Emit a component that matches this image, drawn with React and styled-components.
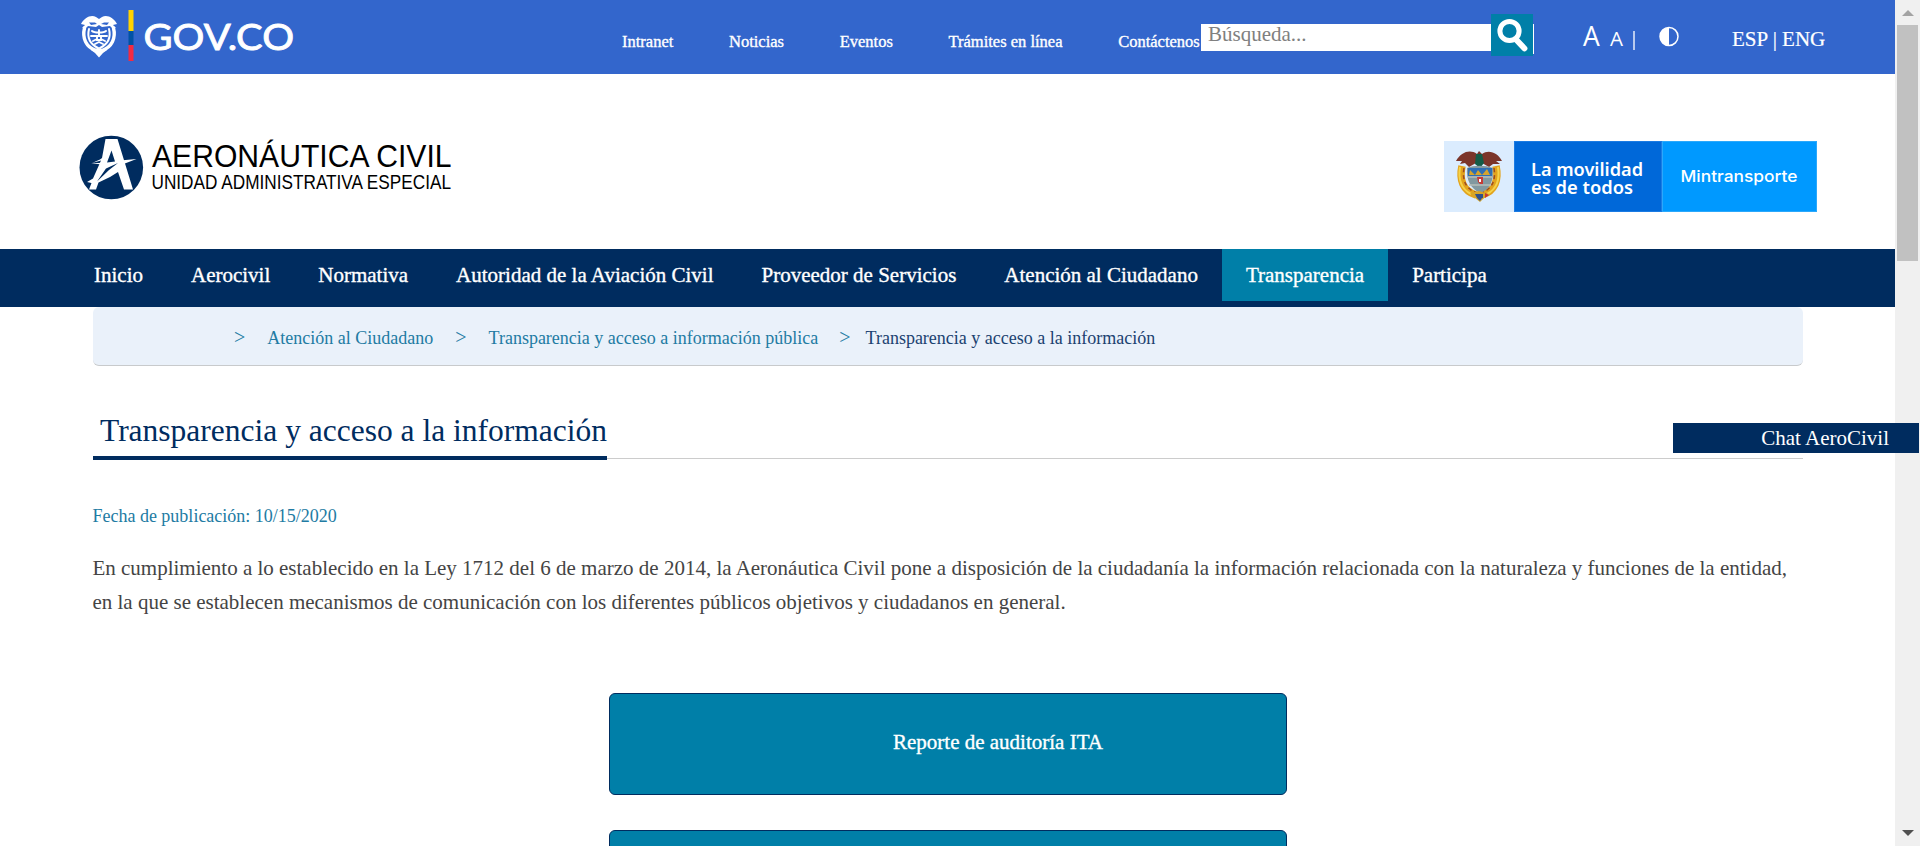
import React from 'react';
import styled, { createGlobalStyle } from 'styled-components';

const navy = '#002c5f';
const teal = '#007fa8';

const GlobalStyle = createGlobalStyle`
  * { box-sizing: border-box; }
  body { margin: 0; background: #fff; overflow: hidden; }
  a { color: inherit; text-decoration: none; }
  svg { display: block; overflow: visible; }
`;

const Window = styled.div`
  display: flex;
  position: relative;
  height: 846px;
  overflow: hidden;
  font: 21px/34px 'Liberation Serif', serif;
`;
const Page = styled.div`
  flex: 1;
  min-width: 0;
  display: flex;
  flex-direction: column;
`;

const TopBar = styled.header`
  flex: none;
  display: flex;
  align-items: flex-start;
  height: 74px;
  padding-left: 78px;
  background: #3366cc;
  color: #fff;
`;
const TopLinks = styled.nav`
  display: flex;
  gap: 55.7px;
  width: 579px;
  margin-left: 324px;
  padding-top: 32px;
  font-size: 16.5px;
  line-height: 20px;
  white-space: nowrap;
  -webkit-text-stroke: 0.35px #fff;
`;
const Search = styled.form`
  display: flex;
  width: 333px;
  padding-top: 14px;
`;
const SearchInput = styled.input`
  width: 290px;
  height: 27px;
  margin: 10px 0 0;
  padding: 0 7px 7px;
  border: 0;
  border-radius: 0;
  background: #fff;
  font: 21px/20px 'Liberation Serif', serif;
  &::placeholder { color: #808080; opacity: 1; }
`;
const SearchButton = styled.button`
  width: 42px;
  height: 42px;
  padding: 0;
  border: 0;
  background: ${teal};
`;
const SearchEdge = styled.span`
  width: 1px;
  height: 30px;
  margin-top: 10px;
  background: #fff;
`;
const Tools = styled.div`
  display: flex;
  align-items: baseline;
  width: 75px;
  margin: 20px 0 0 49px;
  font-family: 'Open Sans', sans-serif;
  line-height: 33px;
`;
const FontSize = styled.span`
  width: ${(p) => p.$width}px;
  font-size: ${(p) => p.$size}px;
`;
const Divider = styled.span`
  width: 2px;
  height: 19px;
  align-self: flex-start;
  margin: 11px 0 0;
  background: #b9caee;
`;
const Contrast = styled.svg`
  margin: 27px 53px 0 1px;
`;
const Language = styled.div`
  padding-top: 29px;
  line-height: 20px;
  white-space: nowrap;
  -webkit-text-stroke: 0.2px #fff;
`;

const Brand = styled.div`
  flex: none;
  display: flex;
  justify-content: space-between;
  align-items: flex-start;
  height: 175px;
  padding: 56px 78px 0 79px;
`;
const Banner = styled.div`
  display: flex;
  width: 373px;
  height: 71px;
  margin-top: 11px;
`;
const BannerPart = styled.div`
  width: ${(p) => p.$width}px;
  background: ${(p) => p.$bg};
  box-shadow: inset 0 0 0 1px ${(p) => p.$edge};
`;

const MainNav = styled.nav`
  flex: none;
  display: flex;
  height: 58px;
  padding-left: 70px;
  background: ${navy};
`;
const NavItem = styled.a`
  height: 52px;
  padding: 0 24px;
  background: ${(p) => (p.$active ? teal : 'transparent')};
  color: #fff;
  line-height: 52px;
  white-space: nowrap;
  -webkit-text-stroke: 0.35px #fff;
`;

const Content = styled.main`
  flex: none;
  margin: 0 92px 0 93px;
`;
const Breadcrumb = styled.div`
  display: flex;
  height: 59px;
  padding: 2px 0 0 141px;
  border-bottom: 1px solid #c8cacc;
  border-radius: 6px;
  background: #eaf1fa;
  color: #227ba3;
  font-size: 18px;
  line-height: 58px;
  white-space: nowrap;
`;
const Arrow = styled.span`
  margin: 0 ${(p) => p.$after}px 0 ${(p) => p.$before}px;
  font-size: 20px;
  line-height: 56px;
`;
const Current = styled.span`
  color: #1b4270;
`;
const TitleRow = styled.div`
  display: flex;
  height: 54px;
  margin-top: 39px;
  border-bottom: 1px solid #ccc;
`;
const Title = styled.h1`
  height: 55px;
  margin: 0;
  padding-left: 7px;
  border-bottom: 4px solid ${navy};
  color: ${navy};
  font-size: 31.5px;
  font-weight: 400;
  line-height: 51px;
  white-space: nowrap;
`;
const Published = styled.p`
  margin: 47px 0 0 -0.6px;
  color: #227ba3;
  font-size: 18px;
  line-height: 20px;
`;
const Intro = styled.p`
  margin: 25px 0 0 -0.6px;
  color: #444;
`;
const Cards = styled.div`
  display: flex;
  flex-direction: column;
  align-items: center;
  gap: 35px;
  margin-top: 74px;
`;
const Card = styled.a`
  width: 678px;
  height: 102px;
  padding-left: 100px;
  border: 1px solid ${navy};
  border-radius: 6px;
  background: ${teal};
  color: #fff;
  line-height: 96px;
  text-align: center;
  -webkit-text-stroke: 0.35px #fff;
`;

const ChatTab = styled.button`
  position: absolute;
  top: 423px;
  right: 1px;
  width: 246px;
  height: 30px;
  padding: 0 30px 0 0;
  border: 0;
  background: ${navy};
  color: #fff;
  font: 21px/30px 'Liberation Serif', serif;
  text-align: right;
`;

const Scrollbar = styled.div`
  display: flex;
  flex-direction: column;
  align-items: center;
  width: 25px;
  padding: 10px 0;
  background: #f0f0f0;
`;
const Thumb = styled.div`
  width: 21px;
  height: 236px;
  margin: 9px 0 auto;
  background: #c1c1c1;
`;

const GovLogo = () => (
  <svg width="220" height="74" viewBox="78 0 220 74">
    <g fill="none" stroke="#fff" strokeLinecap="round">
      <path d="M81 24C84 18 91 14 96 17L99 19L102 17C107 14 114 18 117 24L113 25L116 28L112 28L110 26L102 27L99 25L96 27L88 26L86 28L82 28L85 25Z" fill="#fff" stroke="none" />
      <path d="M84.500 28C82 38 86 47 96 50.500M113.500 28C116 38 112 47 102 50.500" strokeWidth="3.400" />
      <path d="M89 29C87 37 90 44 98 48M109 29C111 37 108 44 100 48" strokeWidth="2" />
      <path d="M92 31C94 33 104 33 106 31M91 36H96M102 36H107M93 41L97 39M105 41L101 39M99 30V36M97 36H101V40H97ZM95 44L99 42L103 44" strokeWidth="1.900" />
      <path d="M91 50L98 48L107 50L103 53L99 57.500L95 53Z" fill="#fff" stroke="none" />
    </g>
    <path d="M89 22.500H95L97 24L91 25ZM101 24L104 22.500H109L107 25Z" fill="#3366cc" />
    <rect x="128.500" y="10" width="5" height="21" fill="#ffd200" />
    <rect x="128.500" y="31" width="5" height="14" fill="#0052a5" />
    <rect x="128.500" y="45" width="5" height="16" fill="#f42a41" />
    <text x="143.500" y="50" textLength="150.500" lengthAdjust="spacingAndGlyphs" fill="#fff" stroke="#fff" strokeWidth=".9" fontFamily="Lato, sans-serif" fontSize="37.500">GOV.CO</text>
  </svg>
);

const AeroLogo = () => (
  <svg width="380" height="84" viewBox="79 130 380 84">
    <circle cx="111.300" cy="167.500" r="31.800" fill={navy} />
    <path d="M105.500 139H117.500L133 189.500H124L118 172L110 177L98.500 182.500L96 189.500H89L91.500 183L87 182L93 178.500L101 160.500L92 163L100 159.500L102 158Z" fill="#fff" />
    <path d="M91 163.500L112 162L120 160.500L136.500 159L121 165L114 171L106 175L90 183L105 171L110 165Z" fill="#fff" />
    <path d="M111.500 150.500L115 161.500L107 162.500ZM106 168.500L118 163L109 170L97 181.500Z" fill={navy} />
    <g fill="#000" fontFamily="'Liberation Sans', sans-serif">
      <text x="152" y="167" fontSize="30.500" textLength="299.500" lengthAdjust="spacingAndGlyphs">AERONÁUTICA CIVIL</text>
      <text x="151.500" y="189" fontSize="20.300" textLength="299.500" lengthAdjust="spacingAndGlyphs">UNIDAD ADMINISTRATIVA ESPECIAL</text>
    </g>
  </svg>
);

const CoatOfArms = () => (
  <svg width="70" height="71" viewBox="0 0 70 71">
    <path d="M18 25C15 39 19 50 32 54M52 25C55 39 51 50 38 54" fill="none" stroke="#e2a31c" strokeWidth="7.500" />
    <path d="M20 27C18 40 22 48 33 52M50 27C52 40 48 48 37 52" fill="none" stroke="#9c4a22" strokeWidth="1.500" strokeDasharray="4 3" />
    <path d="M16 26C14 39 17 48 27 53M54 26C56 39 53 48 43 53" fill="none" stroke="#f5d34a" strokeWidth="2" />
    <path d="M12 20C17 11 26 8 33 13L35 10L38 13C45 8 54 12 58 20L52 20L56 23L49 23L45 26L38 22H32L25 26L21 22L16 23L18 20Z" fill="#7b352a" />
    <path d="M32 13H38L40 22L36 27L31 23Z" fill="#145c48" />
    <path d="M23 27C30 24 41 24 49 27C50 39 46 49 36 52C27 48 22 39 23 27Z" fill="#8299a0" />
    <path d="M24 27H48V35H24Z" fill="#2f6fb4" />
    <path d="M26 29L31 34L34 29L38 34L43 28L46 34H25Z" fill="#d6a42d" />
    <path d="M24 36H48M25 44H47" stroke="#b7bdb8" strokeWidth="1.500" />
    <path d="M33 36H39V43H36L34 41Z" fill="#c63b35" />
    <path d="M35 38H37V41H35Z" fill="#fff" />
    <path d="M26 52L35 50L45 53L40 57L36 61L31 57Z" fill="#d8a527" />
    <path d="M31 53H39V57H33ZM33 57H38L36 60Z" fill="#31518b" />
    <path d="M41 52L45 54L41 57Z" fill="#c93932" />
  </svg>
);

const SearchIcon = () => (
  <svg width="42" height="42" viewBox="0 0 42 42">
    <circle cx="18.500" cy="17" r="9.600" fill="none" stroke="#fff" strokeWidth="5" />
    <path d="M25.500 26L33.500 34.500" stroke="#fff" strokeWidth="5.800" strokeLinecap="round" />
  </svg>
);

const sections = ['Inicio', 'Aerocivil', 'Normativa', 'Autoridad de la Aviación Civil', 'Proveedor de Servicios', 'Atención al Ciudadano', 'Transparencia', 'Participa'];
const links = ['Intranet', 'Noticias', 'Eventos', 'Trámites en línea', 'Contáctenos'];

export default function App() {
  return (
    <Window>
      <GlobalStyle />
      <Page>
        <TopBar>
          <GovLogo />
          <TopLinks>{links.map((l) => <a key={l} href="#">{l}</a>)}</TopLinks>
          <Search>
            <SearchInput placeholder="Búsqueda..." />
            <SearchButton type="button" aria-label="Buscar"><SearchIcon /></SearchButton>
            <SearchEdge />
          </Search>
          <Tools>
            <FontSize $width={27} $size={26.5}>A</FontSize>
            <FontSize $width={23} $size={20.5}>A</FontSize>
            <Divider />
          </Tools>
          <Contrast width="20" height="20" viewBox="0 0 20 20">
            <circle cx="10" cy="9.500" r="9" fill="none" stroke="#fff" strokeWidth="1.500" />
            <path d="M10 .5A9 9 0 0 0 10 18.500Z" fill="#fff" />
          </Contrast>
          <Language>ESP | ENG</Language>
        </TopBar>
        <Brand>
          <AeroLogo />
          <Banner>
            <BannerPart $width={70} $bg="#dbecfe" $edge="#dbecfe"><CoatOfArms /></BannerPart>
            <BannerPart $width={148} $bg="#0068d9" $edge="#1b7be3">
              <svg width="148" height="71" fill="#fff" fontFamily="'Noto Sans', sans-serif" fontSize="18" fontWeight="600">
                <text x="17" y="35" textLength="112" lengthAdjust="spacingAndGlyphs">La movilidad</text>
                <text x="17" y="53" textLength="102" lengthAdjust="spacingAndGlyphs">es de todos</text>
              </svg>
            </BannerPart>
            <BannerPart $width={155} $bg="#0099ff" $edge="#2ba8fb">
              <svg width="155" height="71" fill="#fff" fontFamily="Inter, sans-serif" fontSize="16.500" fontWeight="500">
                <text x="18.500" y="41" textLength="117" lengthAdjust="spacingAndGlyphs">Mintransporte</text>
              </svg>
            </BannerPart>
          </Banner>
        </Brand>
        <MainNav>
          {sections.map((s) => <NavItem key={s} href="#" $active={s === 'Transparencia'}>{s}</NavItem>)}
        </MainNav>
        <Content>
          <Breadcrumb>
            <Arrow $before={0} $after={22}>&gt;</Arrow>
            <a href="#">Atención al Ciudadano</a>
            <Arrow $before={22} $after={22}>&gt;</Arrow>
            <a href="#">Transparencia y acceso a información pública</a>
            <Arrow $before={21} $after={15}>&gt;</Arrow>
            <Current>Transparencia y acceso a la información</Current>
          </Breadcrumb>
          <TitleRow><Title>Transparencia y acceso a la información</Title></TitleRow>
          <Published>Fecha de publicación: 10/15/2020</Published>
          <Intro>
            En cumplimiento a lo establecido en la Ley 1712 del 6 de marzo de 2014, la Aeronáutica Civil pone a disposición de la ciudadanía la información relacionada con la naturaleza y funciones de la entidad, en la que se establecen mecanismos de comunicación con los diferentes públicos objetivos y ciudadanos en general.
          </Intro>
          <Cards>
            <Card href="#">Reporte de auditoría ITA</Card>
            <Card href="#" />
          </Cards>
        </Content>
      </Page>
      <Scrollbar>
        <svg width="12" height="6"><path d="M0 6L6 0L12 6Z" fill="#a3a3a3" /></svg>
        <Thumb />
        <svg width="12" height="6"><path d="M0 0H12L6 6Z" fill="#505050" /></svg>
      </Scrollbar>
      <ChatTab>Chat AeroCivil</ChatTab>
    </Window>
  );
}
